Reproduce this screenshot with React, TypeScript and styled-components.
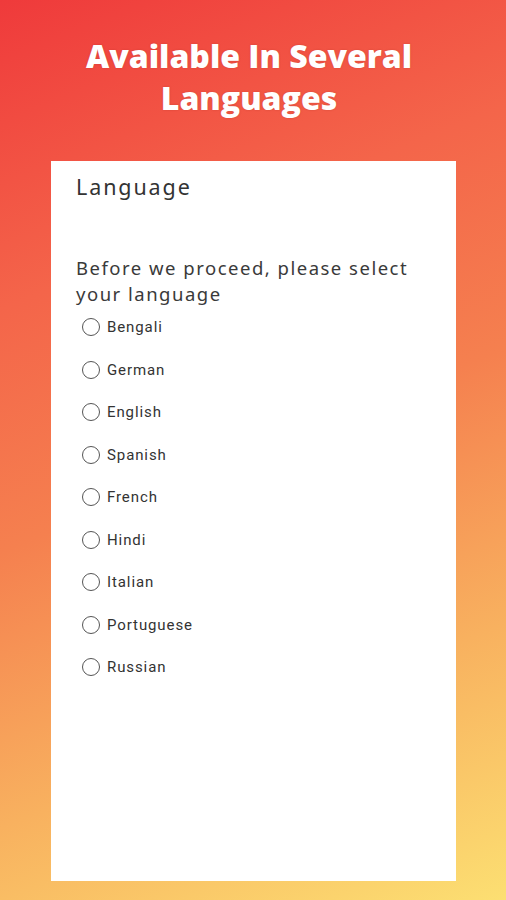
import React, { useState } from "react";
import styled, { createGlobalStyle } from "styled-components";

const Global = createGlobalStyle`
  html, body { margin: 0; padding: 0; }
  body { width: 506px; height: 900px; overflow: hidden; }
`;

const Page = styled.div`
  width: 506px;
  height: 900px;
  box-sizing: border-box;
  background: linear-gradient(158deg, #ef3a3b 0%, #f4654a 28%, #f5804f 50%, #f8b15f 75%, #fcdf72 100%);
  display: flex;
  flex-direction: column;
  align-items: center;
  padding-top: 35px;
`;

const Title = styled.h1`
  margin: 0 8px 0 0;
  color: #fff;
  font-family: "Open Sans", sans-serif;
  font-weight: 800;
  font-size: 32px;
  line-height: 42px;
  text-align: center;
  text-shadow: 0 0 2px rgba(150, 40, 30, 0.35);
`;

const Card = styled.div`
  margin-top: 42px;
  width: 405px;
  height: 720px;
  margin-left: 1px;
  background: #fff;
  box-sizing: border-box;
  padding: 14px 0 0 25px;
  display: flex;
  flex-direction: column;
`;

const Heading = styled.div`
  font-family: "Noto Sans", sans-serif;
  font-size: 21.5px;
  letter-spacing: 1.9px;
  color: #333;
  line-height: 24px;
`;

const Prompt = styled.div`
  margin-top: 56px;
  font-family: "Noto Sans", sans-serif;
  font-size: 18.5px;
  letter-spacing: 1.5px;
  line-height: 26px;
  color: #3a3a3a;
`;

const List = styled.div`
  margin-top: -1px;
  display: flex;
  flex-direction: column;
`;

const Row = styled.label`
  display: flex;
  align-items: center;
  height: 42.5px;
  padding-left: 6px;
  gap: 7px;
  cursor: pointer;
`;

const Circle = styled.span<{ $on: boolean }>`
  width: 16px;
  height: 16px;
  border-radius: 50%;
  border: 1.7px solid #555;
  display: flex;
  align-items: center;
  justify-content: center;
  &::after {
    content: "";
    width: 9px;
    height: 9px;
    border-radius: 50%;
    background: ${(p) => (p.$on ? "#555" : "transparent")};
  }
`;

const Label = styled.span`
  font-family: "Roboto", sans-serif;
  font-size: 15px;
  color: #333;
  letter-spacing: 0.9px;
`;

const langs = ["Bengali", "German", "English", "Spanish", "French", "Hindi", "Italian", "Portuguese", "Russian"];

export default function App() {
  const [sel, setSel] = useState<string | null>(null);
  return (
    <>
      <Global />
      <Page>
        <Title>
          Available In Several
          <br />
          Languages
        </Title>
        <Card>
          <Heading>Language</Heading>
          <Prompt>
            Before we proceed, please select
            <br />
            your language
          </Prompt>
          <List>
            {langs.map((l) => (
              <Row key={l} onClick={() => setSel(l)}>
                <Circle $on={sel === l} />
                <Label>{l}</Label>
              </Row>
            ))}
          </List>
        </Card>
      </Page>
    </>
  );
}
